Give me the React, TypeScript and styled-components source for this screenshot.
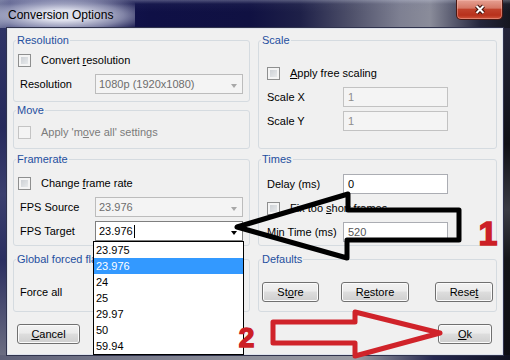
import styled, { createGlobalStyle } from "styled-components";

const GlobalStyle = createGlobalStyle`
  html, body {
    margin: 0;
    padding: 0;
  }
  body {
    width: 510px;
    height: 360px;
    overflow: hidden;
    font-family: "Liberation Sans", Arial, sans-serif;
    font-size: 11px;
    color: #000;
  }
`;

const fpsList = ["23.975", "23.976", "24", "25", "29.97", "50", "59.94"];

export default function App() {
  return (
    <>
      <GlobalStyle />
      <Window>
        <TitleBar>
          <Title>Conversion Options</Title>
          <CloseButton>
            <svg width="14" height="11" viewBox="0 0 14 11">
              <path d="M3.5 2 L10.5 9 M10.5 2 L3.5 9" stroke="#3b0f0a" strokeWidth="4" />
              <path d="M3.5 2 L10.5 9 M10.5 2 L3.5 9" stroke="#fff" strokeWidth="2" />
            </svg>
          </CloseButton>
        </TitleBar>

        <Client>
          <Columns>
            <Stack>
              <Group $height={70}>
                <Legend>Resolution</Legend>
                <Body $top={0} $inset={2}>
                  <Row>
                    <Check />
                    <CheckText>
                      Convert <u>r</u>esolution
                    </CheckText>
                  </Row>
                  <Row>
                    <FieldLabel $width={77} $indent={2}>
                      Resolution
                    </FieldLabel>
                    <Combo $width={148}>
                      1080p (1920x1080)
                      <ComboArrow />
                    </Combo>
                  </Row>
                </Body>
              </Group>
              <Group $height={47}>
                <Legend>Move</Legend>
                <Body $top={2} $inset={2}>
                  <Row>
                    <Check $disabled />
                    <CheckText $disabled>
                      Apply 'm<u>o</u>ve all' settings
                    </CheckText>
                  </Row>
                </Body>
              </Group>
            </Stack>

            <Group $height={117}>
              <Legend>Scale</Legend>
              <Body $top={13} $inset={6}>
                <Row>
                  <Check />
                  <CheckText>
                    <u>A</u>pply free scaling
                  </CheckText>
                </Row>
                <Row>
                  <FieldLabel $width={76}>Scale X</FieldLabel>
                  <TextBox $disabled>1</TextBox>
                </Row>
                <Row>
                  <FieldLabel $width={76}>Scale Y</FieldLabel>
                  <TextBox $disabled>1</TextBox>
                </Row>
              </Body>
            </Group>

            <Group $height={95}>
              <Legend>Framerate</Legend>
              <Body $top={4} $inset={2}>
                <Row>
                  <Check />
                  <CheckText>
                    Change <u>f</u>rame rate
                  </CheckText>
                </Row>
                <Row>
                  <FieldLabel $width={77} $indent={2}>
                    FPS Source
                  </FieldLabel>
                  <Combo $width={148}>
                    23.976
                    <ComboArrow />
                  </Combo>
                </Row>
                <Row>
                  <FieldLabel $width={77} $indent={2}>
                    FPS Target
                  </FieldLabel>
                  <Combo $width={148} $active>
                    23.976
                    <Caret />
                    <ComboArrow $active />
                    <DropList>
                      {fpsList.map((fps) => (
                        <Option key={fps} $selected={fps === "23.976"}>
                          {fps}
                        </Option>
                      ))}
                    </DropList>
                  </Combo>
                </Row>
              </Body>
            </Group>

            <Group $height={95}>
              <Legend>Times</Legend>
              <Body $top={5} $inset={6}>
                <Row>
                  <FieldLabel $width={76}>Delay (ms)</FieldLabel>
                  <TextBox>0</TextBox>
                </Row>
                <Row>
                  <Check />
                  <CheckText>
                    Fix too <u>s</u>hort frames
                  </CheckText>
                </Row>
                <Row>
                  <FieldLabel $width={76}>Min Time (ms)</FieldLabel>
                  <TextBox $muted>520</TextBox>
                </Row>
              </Body>
            </Group>

            <Group $height={61}>
              <Legend>Global forced flags</Legend>
              <Body $top={13} $inset={2}>
                <Row>
                  <FieldLabel $width={77} $indent={2}>
                    Force all
                  </FieldLabel>
                  <Combo $width={148} $active>
                    <ComboArrow $active />
                  </Combo>
                </Row>
              </Body>
            </Group>

            <Group $height={61}>
              <Legend>Defaults</Legend>
              <Body $top={13} $inset={1}>
                <ButtonRow>
                  <Button $width={57}>
                    St<u>o</u>re
                  </Button>
                  <Button $width={68}>
                    R<u>e</u>store
                  </Button>
                  <Button $width={58}>
                    Rese<u>t</u>
                  </Button>
                </ButtonRow>
              </Body>
            </Group>
          </Columns>

          <DialogButtons>
            <Button $width={63}>
              <u>C</u>ancel
            </Button>
            <Button $width={54}>
              <u>O</u>k
            </Button>
          </DialogButtons>
        </Client>

        <Annotations width="510" height="360" viewBox="0 0 510 360">
          <polygon
            points="237,227 348,194 348,210 459,210 459,240 347,240 347,258"
            fill="none"
            stroke="#000"
            strokeWidth="5"
            strokeLinejoin="round"
          />
          <polygon
            points="440,333 355,312 355,322 273,322 273,343 355,343 355,356"
            fill="none"
            stroke="#d0232a"
            strokeWidth="5"
            strokeLinejoin="round"
          />
          <Mark x="488" y="245" textAnchor="middle" fontSize="34">
            1
          </Mark>
          <Mark x="246.5" y="347" textAnchor="middle" fontSize="28">
            2
          </Mark>
        </Annotations>
      </Window>
    </>
  );
}

const Window = styled.div`
  position: relative;
  width: 510px;
  height: 360px;
  display: flex;
  flex-direction: column;
  background:
    linear-gradient(90deg, #5e6078 0%, #8b8d99 45%, #9a9ba3 70%, #25284f 85%, #111220 100%) left bottom / 100% 5px no-repeat,
    linear-gradient(180deg, #2f3466 0%, #262a5c 30%, #3a3f6e 50%, #2a2e60 70%, #6e7083 100%) left 0 top 28px / 7px calc(100% - 28px) no-repeat,
    linear-gradient(180deg, #24253a 0%, #101016 35%, #3a3b44 55%, #141419 70%, #0e0e14 100%) right 0 top 28px / 7px calc(100% - 28px) no-repeat,
    linear-gradient(180deg, rgba(200, 205, 225, 0.35) 0px, rgba(120, 125, 160, 0.08) 4px, rgba(0, 0, 0, 0) 12px),
    linear-gradient(90deg, #545a86 0px, #2a2e68 10px, #16185a 40px, #0f1046 150px, #101142 250px, #1e2048 300px, #4d4f69 350px, #7e8092 400px, #8a8c9a 430px, #55576c 455px, #24263c 480px, #15161f 510px);
`;

const TitleBar = styled.div`
  flex: none;
  height: 28px;
  display: flex;
  align-items: flex-start;
  padding-right: 7px;
`;

const Title = styled.div`
  padding: 7px 22px 5px 8px;
  line-height: 16px;
  font-size: 12px;
  color: #000;
  background: radial-gradient(
    ellipse 70% 75% at 46% 55%,
    rgba(232, 234, 244, 0.95) 25%,
    rgba(190, 194, 216, 0.65) 65%,
    rgba(150, 155, 190, 0) 100%
  );
`;

const CloseButton = styled.div`
  margin-left: auto;
  width: 47px;
  height: 20px;
  box-sizing: border-box;
  border: 1px solid #4a1812;
  border-top: none;
  border-radius: 0 0 5px 5px;
  background: linear-gradient(180deg, #e6a092 0%, #d57866 42%, #c0412b 50%, #b8311c 80%, #d0553c 100%);
  box-shadow: inset 0 0 0 1px rgba(255, 200, 190, 0.4);
  display: flex;
  align-items: center;
  justify-content: center;
`;

const Client = styled.div`
  flex: none;
  height: 327px;
  margin: 0 7px;
  box-sizing: border-box;
  border: 1px solid #dfe3ec;
  box-shadow: 0 0 0 1px #30334d;
  background: #f0f0f0;
  padding: 3px 5px 0;
  display: flex;
  flex-direction: column;
`;

const Columns = styled.div`
  display: grid;
  grid-template-columns: 237px 239px;
  grid-template-rows: 119px 100px 61px;
  column-gap: 8px;
  align-items: start;
`;

const Stack = styled.div`
  display: flex;
  flex-direction: column;
`;

const Group = styled.fieldset<{ $height: number }>`
  box-sizing: border-box;
  height: ${(p) => p.$height}px;
  margin: 0;
  padding: 0 2px;
  min-width: 0;
  border: 1px solid #d5dbe0;
  border-radius: 3px;
`;

const Legend = styled.legend`
  padding: 0 1px;
  font-size: 11px;
  line-height: 16px;
  color: #1f4f9f;
  white-space: nowrap;
`;

const Body = styled.div<{ $top: number; $inset: number }>`
  display: flex;
  flex-direction: column;
  padding: ${(p) => p.$top}px 0 0 ${(p) => p.$inset}px;
`;

const Row = styled.div`
  display: flex;
  align-items: center;
  height: 24px;
`;

const ButtonRow = styled(Row)`
  gap: 22px;
  padding-right: 1px;

  & > :last-child {
    margin-left: auto;
  }
`;

const Check = styled.span<{ $disabled?: boolean }>`
  flex: none;
  box-sizing: border-box;
  width: 13px;
  height: 13px;
  border: 1px solid ${(p) => (p.$disabled ? "#c4c4c4" : "#8e8f8f")};
  background: ${(p) =>
    p.$disabled ? "#f4f4f4" : "linear-gradient(135deg, #c6cacf 0%, #eef0f1 100%)"};
  box-shadow: inset 0 0 0 2px #f4f4f4;
`;

const CheckText = styled.span<{ $disabled?: boolean }>`
  margin-left: 10px;
  white-space: nowrap;
  color: ${(p) => (p.$disabled ? "#7b7b7b" : "#000")};
`;

const FieldLabel = styled.span<{ $width: number; $indent?: number }>`
  flex: none;
  box-sizing: border-box;
  width: ${(p) => p.$width}px;
  padding-left: ${(p) => p.$indent ?? 0}px;
  white-space: nowrap;
`;

const Combo = styled.div<{ $width: number; $active?: boolean }>`
  position: relative;
  box-sizing: border-box;
  width: ${(p) => p.$width}px;
  height: 20px;
  display: flex;
  align-items: center;
  padding-left: 3px;
  border: 1px solid ${(p) => (p.$active ? "#7f7f7f" : "#bcbcbc")};
  background: ${(p) => (p.$active ? "#fff" : "#f4f4f4")};
  color: ${(p) => (p.$active ? "#000" : "#6d6d6d")};
`;

const ComboArrow = styled.span<{ $active?: boolean }>`
  margin-left: auto;
  width: 17px;
  height: 100%;
  display: flex;
  align-items: center;
  justify-content: center;

  &::after {
    content: "";
    margin-top: 3px;
    border-left: 3.5px solid transparent;
    border-right: 3.5px solid transparent;
    border-top: 4px solid ${(p) => (p.$active ? "#000" : "#a8a8a8")};
  }
`;

const Caret = styled.span`
  width: 1px;
  height: 13px;
  margin-left: 1px;
  background: #000;
`;

const DropList = styled.ul`
  position: absolute;
  top: calc(100% + 1px);
  left: -3px;
  z-index: 5;
  box-sizing: border-box;
  width: 151px;
  height: 114px;
  margin: 0;
  padding: 0;
  list-style: none;
  border: 1px solid #000;
  background: #fff;
`;

const Option = styled.li<{ $selected?: boolean }>`
  height: 16px;
  line-height: 16px;
  padding-left: 2px;
  background: ${(p) => (p.$selected ? "#3399ff" : "transparent")};
  color: ${(p) => (p.$selected ? "#fff" : "#000")};
`;

const TextBox = styled.div<{ $disabled?: boolean; $muted?: boolean }>`
  box-sizing: border-box;
  width: 105px;
  height: 20px;
  display: flex;
  align-items: center;
  padding-left: 4px;
  border: 1px solid ${(p) => (p.$disabled ? "#c2c2c2" : "#abadb3")};
  background: ${(p) => (p.$disabled ? "#f4f4f4" : "#fff")};
  color: ${(p) => (p.$disabled ? "#8d8d8d" : p.$muted ? "#555" : "#000")};
`;

const Button = styled.button<{ $width: number }>`
  box-sizing: border-box;
  width: ${(p) => p.$width}px;
  height: 20px;
  padding: 0;
  border: 1px solid #707070;
  border-radius: 3px;
  background: linear-gradient(180deg, #f2f2f2 0%, #ebebeb 45%, #dddddd 50%, #cfcfcf 100%);
  box-shadow: inset 0 0 0 1px #fbfbfb;
  font-family: inherit;
  font-size: 11px;
  color: #000;
`;

const DialogButtons = styled.div`
  display: flex;
  justify-content: space-between;
  margin-top: 12px;
  padding: 0 5px 0 4px;
`;

const Annotations = styled.svg`
  position: absolute;
  top: 0;
  left: 0;
  z-index: 20;
  pointer-events: none;
`;

const Mark = styled.text`
  font-family: "Liberation Sans", Arial, sans-serif;
  font-weight: bold;
  fill: #cc1f26;
  stroke: #cc1f26;
  stroke-width: 1.5px;
`;
